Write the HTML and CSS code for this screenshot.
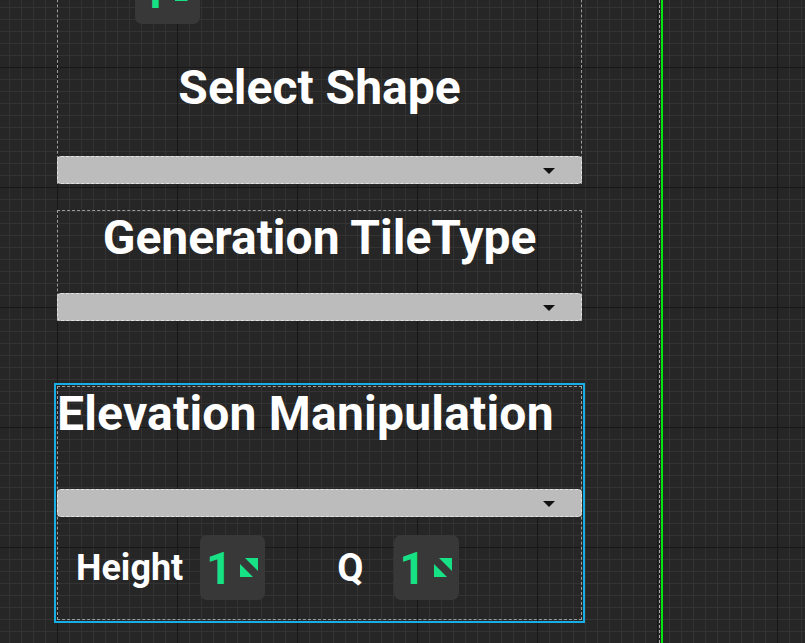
FILE: index.html
```html
<!DOCTYPE html>
<html lang="en">
<head>
<meta charset="utf-8">
<title>Widget Designer</title>
<link rel="stylesheet" href="styles.css">
</head>
<body>
<div class="canvas">
  <div class="panel">
    <section class="box box-open">
      <div class="spin spin-top">
        <span class="num">1</span>
        <svg class="drag" viewBox="0 0 18 19" width="18" height="19"><polygon points="5,0 18,0 18,13"/><polygon points="0,6 0,19 13,19"/></svg>
      </div>
      <h2 class="title center">Select Shape</h2>
      <div class="combo"><span class="arrow"></span></div>
    </section>

    <section class="box box-dashed">
      <h2 class="title center">Generation TileType</h2>
      <div class="combo"><span class="arrow"></span></div>
    </section>

    <section class="box box-dashed selected">
      <h2 class="title left">Elevation Manipulation</h2>
      <div class="combo combo-lower"><span class="arrow"></span></div>
      <div class="row">
        <span class="label label-height">Height</span>
        <div class="spin">
          <span class="num">1</span>
          <svg class="drag" viewBox="0 0 18 19" width="18" height="19"><polygon points="5,0 18,0 18,13"/><polygon points="0,6 0,19 13,19"/></svg>
        </div>
        <span class="label label-q">Q</span>
        <div class="spin">
          <span class="num">1</span>
          <svg class="drag" viewBox="0 0 18 19" width="18" height="19"><polygon points="5,0 18,0 18,13"/><polygon points="0,6 0,19 13,19"/></svg>
        </div>
      </div>
    </section>
  </div>
  <div class="edge">
    <div class="edge-dash"></div>
    <div class="edge-green"></div>
  </div>
</div>
</body>
</html>
```

FILE: styles.css
```css
* { box-sizing: border-box; }

html, body {
  margin: 0;
  padding: 0;
  background: #262626;
}

.canvas {
  width: 805px;
  height: 643px;
  overflow: hidden;
  display: flex;
  align-items: stretch;
  padding-left: 57px;
  font-family: Roboto, "Liberation Sans", sans-serif;
  color: #ffffff;
  background:
    linear-gradient(to right, #171717 1px, transparent 1px) 57px 0 / 120px 120px,
    linear-gradient(to bottom, #171717 1px, transparent 1px) 0 67px / 120px 120px,
    linear-gradient(to right, #333333 1px, transparent 1px) 9px 0 / 12px 12px,
    linear-gradient(to bottom, #333333 1px, transparent 1px) 0 7px / 12px 12px,
    #262626;
}

.panel {
  width: 525px;
  flex: none;
  display: flex;
  flex-direction: column;
}

.box {
  width: 525px;
  display: flex;
  flex-direction: column;
}

.box-open {
  margin-top: -41px;
  border-left: 1px dashed #9c9c9c;
  border-right: 1px dashed #9c9c9c;
}

.box-dashed {
  border: 1px dashed #9c9c9c;
  margin-top: 26px;
}

.selected {
  margin-top: 65px;
  height: 234px;
  outline: 2px solid #17aee6;
  outline-offset: 1px;
}

.title {
  margin: 0;
  font-size: 48px;
  line-height: 54px;
  font-weight: 700;
  white-space: nowrap;
}

.center { text-align: center; }
.left { text-align: left; margin-left: -1px; letter-spacing: 0.2px; }

.box-open .title { margin-top: 37px; }

.combo {
  position: relative;
  height: 28px;
  margin: 0 -1px -1px;
  background: #bcbcbc;
  border: 1px dashed #e2e2e2;
  border-radius: 4px;
  display: flex;
  align-items: center;
  justify-content: flex-end;
  padding-right: 26px;
}

.box-open .combo { margin-top: 41px; margin-bottom: 0; }
.box-dashed .combo { margin-top: 28px; }
.selected .combo { margin-top: 48px; margin-bottom: 0; }

.arrow {
  width: 0;
  height: 0;
  border-left: 6px solid transparent;
  border-right: 6px solid transparent;
  border-top: 6px solid #111111;
  margin-top: 2px;
}

.row {
  display: flex;
  align-items: center;
  margin-top: 18px;
  padding-left: 18px;
}

.label {
  font-size: 36px;
  font-weight: 700;
  line-height: 42px;
  white-space: nowrap;
}

.label-height { margin-right: 17px; }
.label-q { margin-left: 72px; margin-right: 30px; font-size: 38px; }

.spin {
  width: 65px;
  height: 65px;
  flex: none;
  background: #383838;
  border-radius: 7px;
  display: flex;
  align-items: center;
  justify-content: space-between;
  padding: 0 7px 0 6px;
}

.spin-top { margin-left: 77px; }

.num {
  font-size: 45px;
  font-weight: 700;
  line-height: 45px;
  color: #16e184;
  margin-top: 1px;
}

.drag {
  display: block;
  fill: #16e184;
}

.edge {
  margin-left: 77px;
  display: flex;
  gap: 1px;
  height: 100%;
}

.edge-dash {
  width: 1px;
  border-left: 1px dashed #a8a8a8;
}

.edge-green {
  width: 2px;
  background: #00e60f;
}
```
